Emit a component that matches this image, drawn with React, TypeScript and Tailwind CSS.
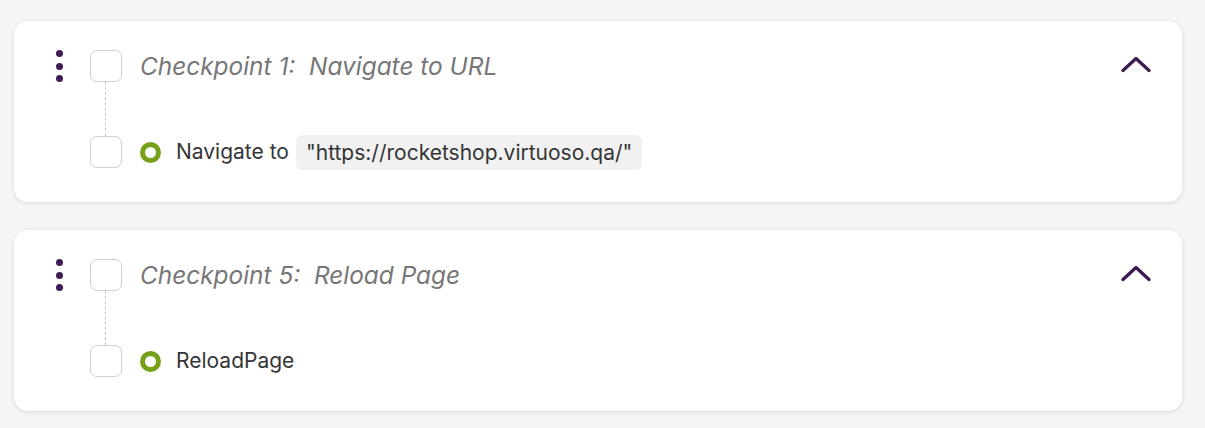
import React from "react";

function Dots() {
  return (
    <div className="flex w-[12px] flex-col items-center gap-[5.5px] pt-0">
      <span className="block h-[7px] w-[7px] rounded-full bg-[#3f1a55]" />
      <span className="block h-[7px] w-[7px] rounded-full bg-[#3f1a55]" />
      <span className="block h-[7px] w-[7px] rounded-full bg-[#3f1a55]" />
    </div>
  );
}

function Box() {
  return <div className="h-[32px] w-[32px] shrink-0 rounded-[7px] border border-[#d0d0d0] bg-white" />;
}

function Chevron() {
  return (
    <svg width="30" height="20" viewBox="0 0 30 20" fill="none">
      <path d="M2 16.5 L15 4.5 L28 16.5" stroke="#3d1b52" strokeWidth="3.2" strokeLinecap="round" strokeLinejoin="round" />
    </svg>
  );
}

function Ring() {
  return <span className="block h-[21px] w-[21px] shrink-0 rounded-full border-[5px] border-[#76a01a]" />;
}

function Card({ title, children }: { title: string; children: React.ReactNode }) {
  return (
    <div className="w-[1168px] rounded-[14px] bg-white pl-[39px] pr-[31px] pt-[29px] pb-[34px] shadow-[0_1px_4px_rgba(0,0,0,0.12)]">
      <div className="flex items-start">
        <Dots />
        <div className="ml-[25px] flex flex-col items-start">
          <div className="flex h-[32px] items-center">
            <Box />
          </div>
          <div className="ml-[15px] h-[54px] border-l border-dashed border-[#c8c8c8]" />
          <Box />
        </div>
        <div className="ml-[18px] flex flex-1 flex-col">
          <div className="flex h-[32px] items-center justify-between">
            <span className="text-[24.4px] italic text-[#777777]">{title}</span>
            <span className="mt-[-4px]"><Chevron /></span>
          </div>
          <div className="h-[54px]" />
          <div className="flex h-[32px] items-center">{children}</div>
        </div>
      </div>
    </div>
  );
}

export default function App() {
  return (
    <div className="min-h-[428px] w-[1205px] bg-[#f5f5f5] pl-[14px] pt-[21px]" style={{ fontFamily: "Inter, 'Noto Sans', sans-serif" }}>
      <div className="flex flex-col gap-[28px]">
        <Card title="Checkpoint 1:&nbsp; Navigate to URL">
          <Ring />
          <span className="ml-[15px] text-[21px] text-[#353535]">Navigate to</span>
          <span className="ml-[7px] rounded-[6px] bg-[#f1f1f1] px-[10px] py-[5px] text-[21px] leading-[25px] text-[#353535]">
            "https://rocketshop.virtuoso.qa/"
          </span>
        </Card>
        <Card title="Checkpoint 5:&nbsp; Reload Page">
          <Ring />
          <span className="ml-[15px] text-[21px] text-[#353535]">ReloadPage</span>
        </Card>
      </div>
    </div>
  );
}
